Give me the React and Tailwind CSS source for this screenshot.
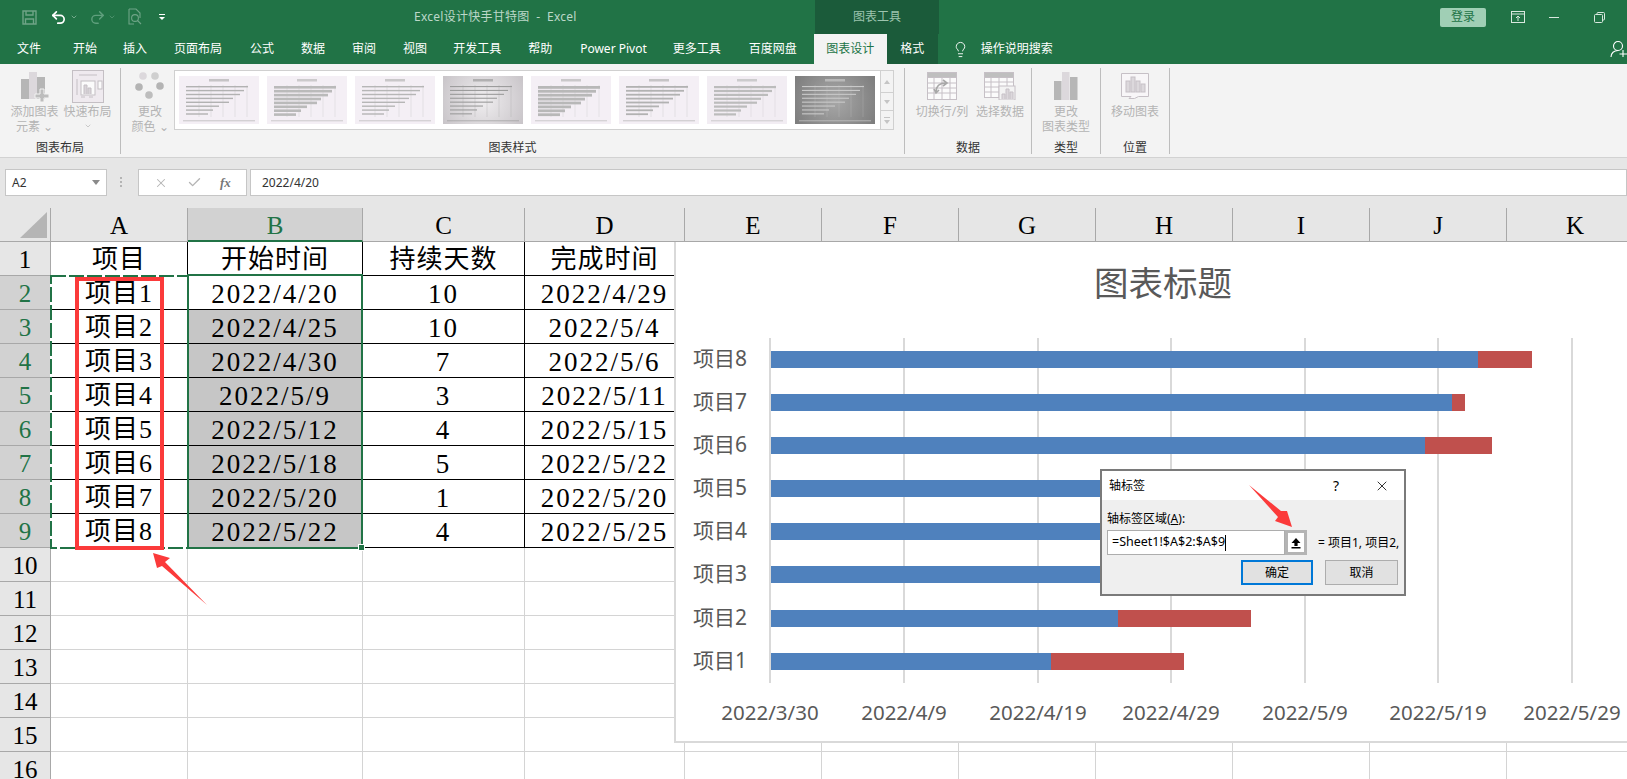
import React from "react";
import { Undo2, Redo2, Lightbulb, X, Check, ChevronDown } from "lucide-react";

const SANS = "font-['Noto_Sans','Noto_Sans_CJK_SC',sans-serif]";
const SERIF = "font-['Liberation_Serif','Noto_Sans_CJK_SC',serif]";

const tabs = [
  { label: "文件", cls: "ml-[17px]" },
  { label: "开始", cls: "ml-[32px]" },
  { label: "插入", cls: "ml-[26px]" },
  { label: "页面布局", cls: "ml-[27px]" },
  { label: "公式", cls: "ml-[28px]" },
  { label: "数据", cls: "ml-[27px]" },
  { label: "审阅", cls: "ml-[27px]" },
  { label: "视图", cls: "ml-[27px]" },
  { label: "开发工具", cls: "ml-[26px]" },
  { label: "帮助", cls: "ml-[27px]" },
  { label: "Power Pivot", cls: "ml-[28px]" },
  { label: "更多工具", cls: "ml-[26px]" },
  { label: "百度网盘", cls: "ml-[28px]" },
];

const thumbs = [
  { wrap: "bg-[#f4eff5]", bar: "#b2b2b2", h: 1.4 },
  { wrap: "bg-[#f4eff5]", bar: "#bababa", h: 2.6 },
  { wrap: "bg-[#f4eff5]", bar: "#b6b6b6", h: 1.4 },
  { wrap: "bg-[radial-gradient(circle,#f0eef0,#c8c4c8)]", bar: "#9c9c9c", h: 1.1 },
  { wrap: "bg-[#f4eff5]", bar: "#b8b8b8", h: 2.8 },
  { wrap: "bg-[#f4eff5]", bar: "#b2b2b2", h: 1.8 },
  { wrap: "bg-[#f2edf3]", bar: "#bcbcbc", h: 2.2 },
  { wrap: "bg-[radial-gradient(circle,#a8a8a8,#7c7c7c)]", bar: "#c9c9c9", h: 1.1 },
];
const thumbBars = [62, 58, 54, 47, 43, 33, 27, 22];

// little preview chart inside the style gallery
const Thumb = ({ wrap, bar, h }) => (
  <div className={`w-[80px] h-[48px] shrink-0 ${wrap}`}>
    <svg width="80" height="48" viewBox="0 0 80 48">
      <rect x="30" y="3" width="20" height="2.5" fill={bar} opacity="0.7" />
      {[20, 32, 44, 56, 68].map((x) => (
        <line key={x} x1={x} y1="9" x2={x} y2="41" stroke={bar} strokeWidth="0.5" opacity="0.5" />
      ))}
      {thumbBars.map((w, i) => (
        <rect key={i} x="7" y={10 + i * 3.9} width={w} height={h} fill={bar} />
      ))}
      <rect x="4" y="44" width="72" height="1.4" fill={bar} opacity="0.5" />
    </svg>
  </div>
);

const RibbonBtn = ({ icon, lines, w = "w-[53px]", arrow }) => (
  <div className={`flex flex-col items-center shrink-0 ${w}`}>
    <div className="h-[36px] flex items-center justify-center">{icon}</div>
    {lines.map((t) => (
      <div key={t} className="text-[12px] leading-[15px] text-[#b4b4b4] whitespace-nowrap">{t}</div>
    ))}
    {arrow === "line" && <ChevronDown size={8} className="text-[#b4b4b4] mt-[3px]" />}
  </div>
);

const Group = ({ w, label, children, pad }) => (
  <div className={`relative flex flex-col h-[86px] border-r border-[#bdbdbd] ${w}`}>
    <div className={`flex items-start ${pad}`}>{children}</div>
    <div className="mt-auto text-center text-[12px] leading-[14px] mb-[-1px] text-[#333333]">{label}</div>
  </div>
);

const colLetters = ["A", "B", "C", "D", "E", "F", "G", "H", "I", "J", "K"];
const rows = [
  ["项目", "开始时间", "持续天数", "完成时间"],
  ["项目1", "2022/4/20", "10", "2022/4/29"],
  ["项目2", "2022/4/25", "10", "2022/5/4"],
  ["项目3", "2022/4/30", "7", "2022/5/6"],
  ["项目4", "2022/5/9", "3", "2022/5/11"],
  ["项目5", "2022/5/12", "4", "2022/5/15"],
  ["项目6", "2022/5/18", "5", "2022/5/22"],
  ["项目7", "2022/5/20", "1", "2022/5/20"],
  ["项目8", "2022/5/22", "4", "2022/5/25"],
];

const bars = [
  { name: "项目8", y: 351, blue: 1478, red: 1532 },
  { name: "项目7", y: 394, blue: 1452, red: 1465 },
  { name: "项目6", y: 437, blue: 1425, red: 1492 },
  { name: "项目5", y: 480, blue: 1300, red: 1340 },
  { name: "项目4", y: 523, blue: 1270, red: 1300 },
  { name: "项目3", y: 566, blue: 1185, red: 1280 },
  { name: "项目2", y: 610, blue: 1118, red: 1251 },
  { name: "项目1", y: 653, blue: 1051, red: 1184 },
];
const gridX = [770, 904, 1038, 1171, 1305, 1438, 1572];
const dates = ["2022/3/30", "2022/4/9", "2022/4/19", "2022/4/29", "2022/5/9", "2022/5/19", "2022/5/29"];

const GanttChart = () => (
  <svg width="951" height="499" viewBox="676 242 951 499" className="block">
    <text x="1163" y="296" textAnchor="middle" fontSize="34.5" fill="#595959">图表标题</text>
    {gridX.map((x) => (
      <rect key={x} x={x - 1} y="338" width="2" height="345" fill="#d9d9d9" />
    ))}
    {bars.map((b) => (
      <g key={b.name}>
        <rect x="771" y={b.y} width={b.blue - 771} height="17" fill="#4f81bd" />
        <rect x={b.blue} y={b.y} width={b.red - b.blue} height="17" fill="#c0504d" />
        <text x="693" y={b.y + 15} fontSize="21" fill="#595959">{b.name}</text>
      </g>
    ))}
    {dates.map((d, i) => (
      <text key={d} x={gridX[i]} y="720" textAnchor="middle" fontSize="20.5" fill="#595959">{d}</text>
    ))}
  </svg>
);

const cellClass = (r, c) => {
  let cls = "flex items-center justify-center overflow-hidden border-r border-b h-[34px] pt-[3px] ";
  const inTable = r < 9 && c < 4;
  cls += inTable ? "border-black " : "border-[#d4d4d4] ";
  if (c === 1 && r >= 2 && r < 9) cls += "bg-[#c6c6c6] ";
  else cls += "bg-white ";
  return cls;
};

const Sheet = () => (
  <div className="grid grid-cols-[51px_137px_175px_162px_160px_137px_137px_137px_137px_137px_137px_137px] text-black">
    <div className="h-[34px] bg-[#e6e6e6] border-r border-b border-[#a8a8a8] relative">
      <svg width="50" height="34" viewBox="0 0 50 34">
        <polygon points="47,4 47,30 20,30" fill="#b5b5b5" />
      </svg>
    </div>
    {colLetters.map((l) => (
      <div
        key={l}
        className={
          l === "B"
            ? "h-[34px] pt-[3px] flex items-center justify-center text-[25px] bg-[#d2d2d2] text-[#217346] border-r border-[#a8a8a8] border-b-2 border-b-[#217346]"
            : "h-[34px] pt-[3px] flex items-center justify-center text-[25px] bg-[#e6e6e6] border-r border-b border-[#a8a8a8]"
        }
      >
        {l}
      </div>
    ))}
    {Array.from({ length: 16 }, (_, r) => (
      <React.Fragment key={r}>
        <div
          className={
            r >= 1 && r < 9
              ? "h-[34px] pt-[2px] flex items-center justify-center text-[25px] bg-[#d2d2d2] text-[#217346] border-r border-b border-[#a8a8a8]"
              : "h-[34px] pt-[2px] flex items-center justify-center text-[25px] bg-[#e6e6e6] border-r border-b border-[#a8a8a8]"
          }
        >
          {r + 1}
        </div>
        {colLetters.map((l, c) => (
          <div key={l} className={cellClass(r, c)}>
            {r < 9 && c < 4 && (
              <span
                className={
                  r === 0 || c === 0
                    ? "text-[26px] leading-none tracking-[1px] whitespace-nowrap"
                    : "text-[27px] leading-none tracking-[2px] whitespace-nowrap"
                }
              >
                {rows[r][c]}
              </span>
            )}
          </div>
        ))}
      </React.Fragment>
    ))}
  </div>
);

const AxisDialog = () => (
  <div className={`absolute left-[1100px] top-[469px] w-[306px] h-[127px] border-2 border-[#7a7a7a] bg-[#efefef] text-black ${SANS}`}>
    <div className="h-[29px] bg-white flex items-center pl-[7px] text-[12px]">
      <span>轴标签</span>
      <span className="ml-auto text-[14px]">?</span>
      <X size={16} strokeWidth={1.2} className="ml-[35px] mr-[14px]" />
    </div>
    <div className="pl-[5px] pt-[11px] text-[12px] leading-[16px]">
      轴标签区域(<span className="underline">A</span>):
    </div>
    <div className="flex items-center pl-[5px] mt-[3px]">
      <div className="w-[178px] h-[25px] bg-white border border-[#adadad] flex items-center pl-[4px] text-[12.5px] whitespace-nowrap">
        =Sheet1!$A$2:$A$9
        <span className="w-px h-[16px] bg-black" />
      </div>
      <div className="w-[22px] h-[25px] border-[3px] border-[#b4b4b4] bg-white flex items-center justify-center">
        <svg width="12" height="12" viewBox="0 0 12 12">
          <path d="M6 1 L10.5 6 H7.6 V9 H4.4 V6 H1.5 Z" fill="#000" />
          <rect x="1.5" y="10" width="9" height="1.5" fill="#000" />
        </svg>
      </div>
      <span className="ml-[11px] text-[12px] whitespace-nowrap">= 项目1, 项目2,</span>
    </div>
    <div className="flex justify-end mt-[5px] pr-[6px] gap-[12px]">
      <div className="w-[72px] h-[25px] border-2 border-[#0078d7] bg-[#e1e1e1] flex items-center justify-center text-[12px]">确定</div>
      <div className="w-[73px] h-[25px] border border-[#adadad] bg-[#e1e1e1] flex items-center justify-center text-[12px]">取消</div>
    </div>
  </div>
);

export default function App() {
  return (
    <div className={`relative w-[1627px] h-[779px] overflow-hidden bg-[#e6e6e6] ${SANS}`}>
      {/* title bar */}
      <div className="flex h-[34px] bg-[#217346] text-[12px]">
        <div className="w-[414px] flex items-center shrink-0">
          <svg className="ml-[22px]" width="15" height="15" viewBox="0 0 15 15" fill="none" stroke="#6fa487" strokeWidth="1.4">
            <path d="M1 1h13v13H1z" />
            <path d="M4 1v4h7V1M3.5 14V9h8v5" />
          </svg>
          <Undo2 size={17} strokeWidth={2.4} className="ml-[13px] text-white" />
          <ChevronDown size={8} className="ml-[3px] text-[#9cc4ae]" />
          <Redo2 size={17} strokeWidth={2} className="ml-[11px] text-[#5f9f7d]" />
          <ChevronDown size={8} className="ml-[2px] text-[#5f9f7d]" />
          <svg className="ml-[11px]" width="16" height="18" viewBox="0 0 16 18" fill="none" stroke="#6fa487" strokeWidth="1.1">
            <path d="M2 1h7l4 4v5M2 1v15h5" />
            <circle cx="8" cy="10" r="3.4" />
            <path d="M10.5 12.5L14 16" />
          </svg>
          <svg className="ml-[15px]" width="8" height="8" viewBox="0 0 8 8" fill="#fff">
            <rect x="1" y="1" width="6" height="1" />
            <path d="M1 4h6L4 7z" />
          </svg>
        </div>
        <div className="w-[401px] shrink-0 flex items-center text-[#bcd8c9] whitespace-pre tracking-[0.25px]">Excel设计快手甘特图  -  Excel</div>
        <div className="w-[124px] shrink-0 bg-[#1b5b3a] flex items-center justify-center text-[#9cc4ae]">图表工具</div>
        <div className="flex-1 flex items-center">
          <div className="ml-[501px] w-[46px] h-[19px] rounded-[2px] bg-[#a0cfb5] text-[#217346] flex items-center justify-center">登录</div>
          <svg className="ml-[25px]" width="14" height="12" viewBox="0 0 14 12" fill="none" stroke="#d9e8df">
            <rect x="0.5" y="0.5" width="13" height="11" />
            <path d="M0.5 3h13M7 10V5M5 7l2-2 2 2" />
          </svg>
          <div className="ml-[24px] w-[10px] h-px bg-[#d9e8df]" />
          <svg className="ml-[35px]" width="11" height="11" viewBox="0 0 11 11" fill="none" stroke="#d9e8df">
            <rect x="0.5" y="2.5" width="8" height="8" rx="1" />
            <path d="M3 2.5V1.5a1 1 0 0 1 1-1h5.5a1 1 0 0 1 1 1V7a1 1 0 0 1-1 1h-1" />
          </svg>
        </div>
      </div>

      {/* tab row */}
      <div className="relative flex items-stretch h-[30px] bg-[#217346] text-[12px] text-white whitespace-nowrap">
        {tabs.map((t) => (
          <div key={t.label} className={`flex items-center ${t.cls}`}>{t.label}</div>
        ))}
        <div className="ml-[17px] w-[73px] bg-[#f3f3f3] text-[#217346] flex items-center justify-center">图表设计</div>
        <div className="w-[51px] bg-[#1b5b3a] flex items-center justify-center">格式</div>
        <div className="flex items-center ml-[14px]">
          <Lightbulb size={17} strokeWidth={1.3} />
          <span className="ml-[12px]">操作说明搜索</span>
        </div>
        <svg className="absolute left-[1610px] top-[6px]" width="17" height="18" viewBox="0 0 17 18" fill="none" stroke="#fff" strokeWidth="1.1">
          <circle cx="8" cy="6" r="4.5" />
          <path d="M1 17c0-4 3-6.5 7-6.5M9.5 14H17M13 10v7" />
        </svg>
      </div>

      {/* ribbon */}
      <div className="h-[94px] bg-[#f3f3f3] border-b border-[#d2d2d2] flex pt-[4px]">
        <Group w="w-[121px]" label="图表布局" pad="pl-[8px]">
          <RibbonBtn
            lines={["添加图表", "元素 ⌄"]}
            icon={
              <svg width="30" height="32" viewBox="0 0 30 32">
                <rect x="1" y="9" width="8" height="20" fill="#b6b6b6" />
                <rect x="9" y="2" width="8" height="27" fill="#dcd8dc" />
                <rect x="17" y="7" width="8" height="22" fill="#b6b6b6" />
                <path d="M20 19h4v5h5v4h-5v4h-4v-4h-5v-4h5z" fill="#bdbdbd" stroke="#f3f3f3" />
              </svg>
            }
          />
          <RibbonBtn
            lines={["快速布局"]}
            arrow="line"
            icon={
              <svg width="32" height="33" viewBox="0 0 32 33" fill="none" stroke="#c4bfc4">
                <rect x="0.5" y="0.5" width="31" height="32" fill="#efeaef" />
                <path d="M7 5h18M5 9v16M9 27h4M17 27h4" />
                <rect x="9" y="11" width="14" height="14" fill="#fbfbfb" />
                <path d="M12 24v-9h3v9M16 24v-6h3v6" fill="#d9d4d9" />
                <rect x="26" y="11" width="4" height="8" fill="#fbfbfb" />
              </svg>
            }
          />
        </Group>
        <Group w="w-[784px]" label="图表样式" pad="pl-[6px]">
          <RibbonBtn
            w="w-[46px]"
            lines={["更改", "颜色 ⌄"]}
            icon={
              <svg width="30" height="28" viewBox="0 0 30 28">
                <circle cx="8" cy="4" r="3.8" fill="#dcd8dc" />
                <circle cx="20" cy="4" r="3.8" fill="#cfcfcf" />
                <circle cx="4" cy="15" r="3.8" fill="#b4b4b4" />
                <circle cx="25" cy="14" r="3.8" fill="#b4b4b4" />
                <circle cx="14" cy="23" r="3.8" fill="#bdbdbd" />
              </svg>
            }
          />
          <div className="ml-[1px] mt-[2px] w-[720px] h-[60px] bg-white border border-[#d0d0d0] flex items-center pl-[4px]">
            <div className="flex gap-[8px]">
              {thumbs.map((t, i) => (
                <Thumb key={i} {...t} />
              ))}
            </div>
            <div className="ml-[5px] w-[14px] h-[58px] flex flex-col border-l border-[#d0d0d0] bg-[#f3f3f3] text-[#c4c4c4]">
              <div className="h-[22px] border-b border-[#d0d0d0] flex items-center justify-center">
                <svg width="6" height="4" viewBox="0 0 6 4" fill="currentColor"><path d="M3 0l3 4H0z" /></svg>
              </div>
              <div className="h-[18px] border-b border-[#d0d0d0] flex items-center justify-center">
                <svg width="6" height="4" viewBox="0 0 6 4" fill="currentColor"><path d="M0 0h6L3 4z" /></svg>
              </div>
              <div className="flex-1 flex flex-col items-center justify-center gap-[2px]">
                <div className="w-[6px] h-px bg-[#c4c4c4]" />
                <svg width="6" height="4" viewBox="0 0 6 4" fill="currentColor"><path d="M0 0h6L3 4z" /></svg>
              </div>
            </div>
          </div>
        </Group>
        <Group w="w-[127px]" label="数据" pad="pl-[8px]">
          <RibbonBtn
            w="w-[58px]"
            lines={["切换行/列"]}
            icon={
              <svg width="30" height="28" viewBox="0 0 30 28" fill="none" stroke="#c6c0c6">
                <rect x="0.5" y="0.5" width="29" height="27" fill="#fbfbfb" />
                <rect x="0.5" y="0.5" width="29" height="5" fill="#bfbfbf" />
                <path d="M0 11h30M0 16h30M0 21h30M7 6v22M15 6v22M23 6v22" />
                <path d="M9 20c0-6 4-9 10-9M16 8l4 3-4 3M7 17l2 4 3-3" stroke="#a8a8a8" strokeWidth="1.6" />
              </svg>
            }
          />
          <RibbonBtn
            w="w-[58px]"
            lines={["选择数据"]}
            icon={
              <svg width="32" height="28" viewBox="0 0 32 28" fill="none" stroke="#c6c0c6">
                <rect x="0.5" y="0.5" width="29" height="25" fill="#fbfbfb" />
                <rect x="0.5" y="0.5" width="29" height="5" fill="#bfbfbf" />
                <path d="M0 10h30M0 15h30M0 20h30M7 6v20M15 6v20M23 6v20" />
                <rect x="15" y="14" width="16" height="14" fill="#f3f3f3" />
                <path d="M18 27v-5h3v5M22 27V17h3v10M26 27v-7h3v7" fill="#dcd8dc" />
              </svg>
            }
          />
        </Group>
        <Group w="w-[69px]" label="类型" pad="justify-center">
          <RibbonBtn
            lines={["更改", "图表类型"]}
            icon={
              <svg width="24" height="28" viewBox="0 0 24 28">
                <rect x="0" y="9" width="7.5" height="19" fill="#b6b6b6" />
                <rect x="8" y="0" width="7.5" height="28" fill="#dcd8dc" />
                <rect x="16" y="5" width="7.5" height="23" fill="#b6b6b6" />
              </svg>
            }
          />
        </Group>
        <Group w="w-[69px]" label="位置" pad="justify-center">
          <RibbonBtn
            lines={["移动图表"]}
            icon={
              <svg width="28" height="26" viewBox="0 0 28 26" fill="none" stroke="#c6c0c6">
                <path d="M0.5 0.5h27v23h-10l-4 2H8l2-2H0.5z" fill="#f8f6f8" />
                <rect x="5" y="8" width="4" height="11" fill="#dcd8dc" />
                <rect x="10" y="4" width="4" height="15" fill="#dcd8dc" />
                <rect x="15" y="8" width="4" height="11" fill="#dcd8dc" />
                <rect x="20" y="11" width="4" height="8" fill="#dcd8dc" />
              </svg>
            }
          />
        </Group>
      </div>

      {/* formula bar */}
      <div className="h-[50px] pt-[11px] flex items-start text-[12px] text-[#333333]">
        <div className="ml-[5px] w-[102px] h-[27px] bg-white border border-[#c6c6c6] flex items-center pl-[6px]">
          <span>A2</span>
          <svg className="ml-auto mr-[6px]" width="8" height="5" viewBox="0 0 8 5" fill="#8a8a8a"><path d="M0 0h8L4 5z" /></svg>
        </div>
        <div className="ml-[13px] mt-[8px] flex flex-col gap-[2px]">
          <div className="w-[2px] h-[2px] bg-[#b4b4b4]" />
          <div className="w-[2px] h-[2px] bg-[#b4b4b4]" />
          <div className="w-[2px] h-[2px] bg-[#b4b4b4]" />
        </div>
        <div className="ml-[16px] w-[109px] h-[27px] bg-white border border-[#c6c6c6] flex items-center justify-around px-[6px] text-[#b4b4b4]">
          <X size={14} strokeWidth={1.8} />
          <Check size={15} strokeWidth={2.2} />
          <span className="font-['Liberation_Serif',serif] italic font-bold text-[13px] text-[#777777]">fx</span>
        </div>
        <div className="ml-[3px] flex-1 h-[27px] bg-white border border-[#c6c6c6] flex items-center pl-[11px]">2022/4/20</div>
      </div>

      {/* worksheet */}
      <div className={SERIF}>
        <Sheet />
      </div>

      {/* chart sits over the grid */}
      <div className={`absolute left-[674px] top-[242px] w-[953px] h-[501px] bg-white border-l-2 border-b-2 border-[#d9d9d9] ${SANS}`}>
        <GanttChart />
      </div>

      {/* copy marquee and selection */}
      <svg className="absolute left-[49px] top-[274px]" width="141" height="276" viewBox="0 0 141 276" fill="none">
        <rect x="2" y="2" width="137" height="272" stroke="#ffffff" strokeWidth="2" />
        <rect x="2" y="2" width="137" height="272" stroke="#217346" strokeWidth="2" strokeDasharray="15 3" />
      </svg>
      <div className="absolute left-[187px] top-[274px] w-[176px] h-[275px] border-2 border-[#217346]">
        <div className="absolute right-[-4px] bottom-[-4px] w-[7px] h-[7px] bg-[#217346] border border-white" />
      </div>

      {/* red markup */}
      <div className="absolute left-[75px] top-[277px] w-[89px] h-[273px] border-4 border-[#fb3a3a]" />
      <svg className="absolute left-[150px] top-[550px]" width="60" height="58" viewBox="150 550 60 58">
        <polygon points="153,553 170,558 165,562 207,605 162,566 157,568" fill="#fb3a3a" />
      </svg>

      <AxisDialog />

      <svg className="absolute left-[1245px] top-[482px]" width="50" height="48" viewBox="1245 482 50 48">
        <polygon points="1249,485 1281,511 1287,511 1292,527 1275,521 1278,517" fill="#fb3a3a" />
      </svg>
    </div>
  );
}
